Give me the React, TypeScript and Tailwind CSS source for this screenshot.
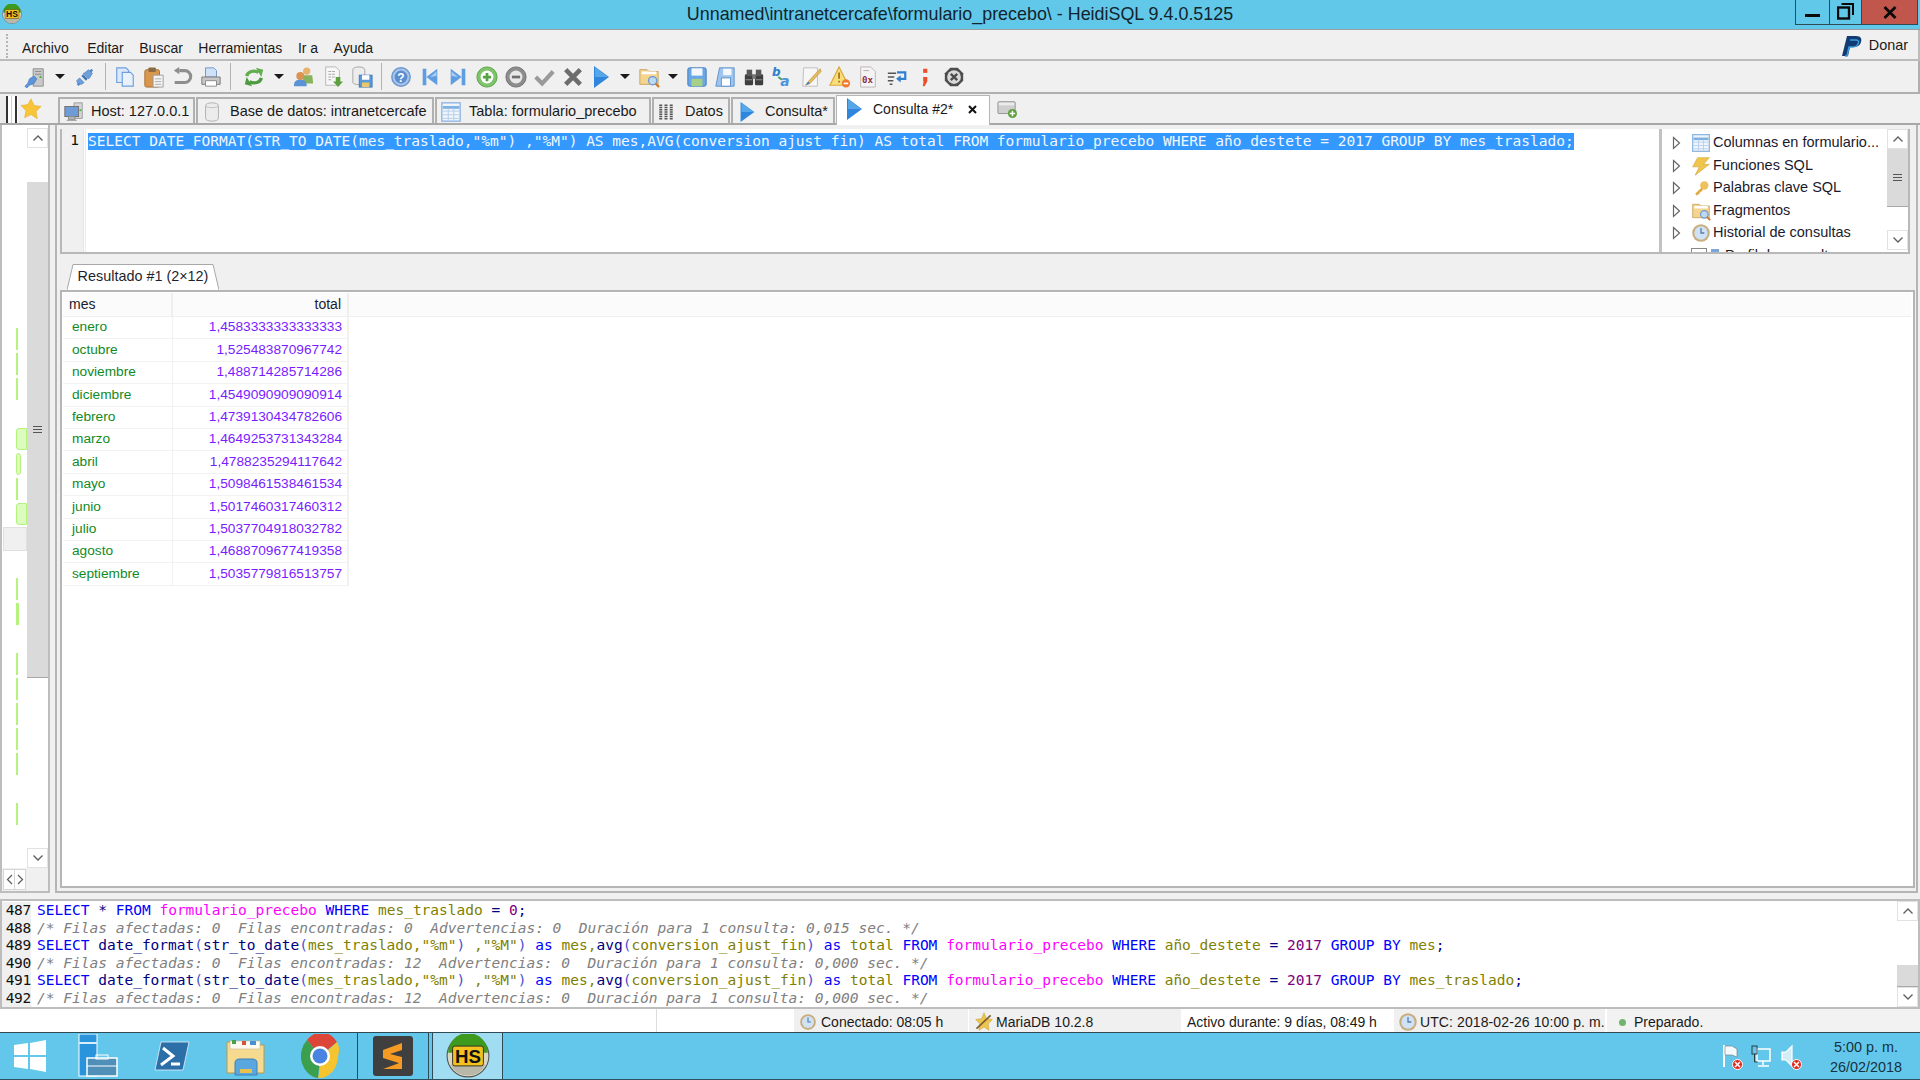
import React from "react";

const S = ({ children, s = 22, className = "" }: { children: React.ReactNode; s?: number; className?: string }) => (
  <svg width={s} height={s} viewBox="0 0 24 24" className={"shrink-0 " + className}>{children}</svg>
);

const PlugBlue = () => (
  <g>
    <path d="M4 21l3-3M20 4l-3 3" stroke="#4f87c9" strokeWidth="2.5" />
    <path d="M6 13l5 5-3 2-4-1-1-3zM11 8l5-4 4 4-3 5-1 1-6-6z" fill="#6ea0dc" stroke="#3f76bb" strokeWidth="0.7" />
    <path d="M8 11l5 5 2-2-5-5z" fill="#3f76bb" />
  </g>
);
const ConnI = () => (
  <S>
    <path d="M10 3h11v19H10z" fill="#c9c9c9" stroke="#8c8c8c" />
    <path d="M12 6h7M12 9h7" stroke="#8a8a8a" />
    <rect x="17" y="11" width="2" height="2" fill="#35b535" />
    <path d="M1 22l3-3 2-5 5-3 3 3-3 5-5 2-3 3z" fill="#5e94d8" stroke="#3f76bb" strokeWidth="0.7" />
  </S>
);
const PlugI = () => <S><PlugBlue /></S>;
const CopyI = () => (
  <S>
    <path d="M3 2h10l3 3v13H3z" fill="#dbe9f9" stroke="#6fa0de" strokeWidth="1.3" />
    <path d="M9 7h9l3 3v12H9z" fill="#e9f2fc" stroke="#6fa0de" strokeWidth="1.3" />
  </S>
);
const PasteI = () => (
  <S>
    <rect x="2" y="4" width="16" height="19" rx="2" fill="#d9964d" stroke="#a96c2b" />
    <rect x="6" y="1.5" width="8" height="5" rx="1" fill="#8a6a45" />
    <path d="M11 10h11v13H11z" fill="#f4f4f4" stroke="#9a9a9a" />
    <path d="M13 14h7M13 17h7M13 20h7" stroke="#a8a8a8" />
  </S>
);
const UndoI = () => (
  <S>
    <path d="M9 5h6a6 6 0 010 13H4" fill="none" stroke="#8e8e8e" strokeWidth="3.4" />
    <path d="M9 1v8l-6-4z" fill="#8e8e8e" />
  </S>
);
const PrintI = () => (
  <S>
    <path d="M6 2h9l3 3v7H6z" fill="#cfe1f7" stroke="#6e94c4" />
    <path d="M2 12h20v8H2z" fill="#c7c7c7" stroke="#777" />
    <path d="M6 16h12v6H6z" fill="#fff" stroke="#888" />
  </S>
);
const RefreshI = () => (
  <S>
    <path d="M4 11c1-5 8-7 13-4" fill="none" stroke="#62ad4e" strokeWidth="3.6" />
    <path d="M14 2l8 2-2 8z" fill="#62ad4e" />
    <path d="M20 13c-1 5-8 7-13 4" fill="none" stroke="#4c9b3f" strokeWidth="3.6" />
    <path d="M10 22l-8-2 2-8z" fill="#4c9b3f" />
  </S>
);
const UsersI = () => (
  <S>
    <circle cx="15" cy="5.5" r="4" fill="#e9b26d" />
    <path d="M10 10h11l1 9H12z" fill="#87b35d" />
    <circle cx="8" cy="11" r="4.4" fill="#d99452" />
    <path d="M1 22c0-6 3-7 7-7s7 1 7 7z" fill="#5b93d6" />
  </S>
);
const ExportI = () => (
  <S>
    <path d="M4 1h11l4 4v16H4z" fill="#f7f7f7" stroke="#b5b5b5" />
    <path d="M7 6h3M11 6h3M7 9h3M11 9h3M7 12h3M11 12h3M7 15h3" stroke="#a0a0a0" />
    <path d="M15 12h5v5h3l-5.500 6L12 17h3z" fill="#5da03e" />
  </S>
);
const DbSaveI = () => (
  <S>
    <path d="M2 4c0-4 13-4 13 0v14c0 3-13 3-13 0z" fill="#ececec" stroke="#a3a3a3" />
    <rect x="9" y="10" width="14" height="13" fill="#5b9ad8" stroke="#3f76bb" />
    <rect x="12" y="10" width="8" height="5" fill="#fff" />
    <rect x="12" y="18" width="8" height="5" fill="#e9c86c" />
  </S>
);
const HelpI = () => (
  <S>
    <circle cx="12" cy="12" r="10" fill="#a9c6ea" stroke="#6c97cf" strokeWidth="1.6" />
    <circle cx="12" cy="12" r="7" fill="#5b8dd0" />
    <text x="12" y="17" textAnchor="middle" fontSize="13" fontWeight="700" fill="#fff" fontFamily="Liberation Sans">?</text>
  </S>
);
const FirstI = () => (
  <S>
    <path d="M4 3h4v18H4z" fill="#5f9de2" />
    <path d="M20 3v18L8 12z" fill="#5f9de2" />
    <path d="M19 6v5l-7 1z" fill="#a9cdf2" />
  </S>
);
const LastI = () => (
  <S>
    <path d="M16 3h4v18h-4z" fill="#5f9de2" />
    <path d="M4 3v18l12-9z" fill="#5f9de2" />
    <path d="M5 6v5l7 1z" fill="#a9cdf2" />
  </S>
);
const PlusI = () => (
  <S>
    <circle cx="12" cy="12" r="11" fill="#7fc46a" stroke="#57a245" />
    <circle cx="12" cy="12" r="7" fill="#fff" />
    <path d="M12 7.500v9M7.500 12h9" stroke="#57a245" strokeWidth="3" />
  </S>
);
const MinusI = () => (
  <S>
    <circle cx="12" cy="12" r="11" fill="#8d8d8d" stroke="#6e6e6e" />
    <circle cx="12" cy="12" r="7" fill="#e9e9e9" />
    <path d="M7.500 12h9" stroke="#6e6e6e" strokeWidth="3" />
  </S>
);
const CheckI = () => (
  <S>
    <path d="M3 12l7 7L22 6" fill="none" stroke="#9a9a9a" strokeWidth="4.5" />
  </S>
);
const XI = () => (
  <S>
    <path d="M4 4l16 16M20 4L4 20" fill="none" stroke="#6d6d6d" strokeWidth="5" />
  </S>
);
const PlayI = ({ s = 24 }: { s?: number }) => (
  <S s={s}>
    <path d="M5 1v22l15-11z" fill="#2f86dc" />
    <path d="M6 2v10h13z" fill="#55a7ea" />
  </S>
);
const FolderI = ({ s = 22 }: { s?: number }) => (
  <S s={s}>
    <path d="M2 4h8l2 2h10v14H2z" fill="#f5d48e" stroke="#c8a35a" />
    <path d="M4 6h16v3H4z" fill="#fff" />
    <circle cx="16" cy="16" r="4.500" fill="#bcd9f3" stroke="#6c97cf" strokeWidth="1.400" />
    <path d="M19 19l4 4" stroke="#cc7a30" strokeWidth="2.400" />
  </S>
);
const SaveI = () => (
  <S>
    <rect x="2" y="2" width="20" height="20" rx="2" fill="#6aa7e6" stroke="#3f76bb" />
    <rect x="6" y="2.500" width="12" height="8" fill="#f4f8fd" />
    <rect x="6" y="14" width="12" height="8" fill="#a6cf87" />
  </S>
);
const SaveAsI = () => (
  <S>
    <path d="M6 2h16v20H2z" fill="#9fc5ee" stroke="#5c8fcb" />
    <rect x="10" y="3" width="9" height="7" fill="#f4f8fd" />
    <rect x="8" y="13" width="10" height="9" fill="#fff" stroke="#5c8fcb" />
  </S>
);
const BinI = () => (
  <S>
    <rect x="2" y="9" width="9" height="12" rx="1.500" fill="#3e3e3e" />
    <rect x="13" y="9" width="9" height="12" rx="1.500" fill="#3e3e3e" />
    <rect x="4" y="4" width="6" height="7" fill="#585858" />
    <rect x="14" y="4" width="6" height="7" fill="#585858" />
    <rect x="10" y="9" width="4" height="5" fill="#777" />
    <path d="M3 15h7M14 15h7" stroke="#9a9a9a" />
  </S>
);
const ReplI = () => (
  <S>
    <text x="1" y="11" fontSize="13" fontWeight="700" fontStyle="italic" fill="#2f7fd0" fontFamily="DejaVu Sans">b</text>
    <text x="10" y="22" fontSize="15" fontWeight="700" fontStyle="italic" fill="#4a94dd" fontFamily="DejaVu Sans">a</text>
    <path d="M8 12l4 3" stroke="#3f9f5f" strokeWidth="2" />
  </S>
);
const PenI = () => (
  <S>
    <path d="M4 2h15v20H3z" fill="#f7f7f7" stroke="#bcbcbc" />
    <path d="M22 3L9 17l-3 4 5-2L23 6z" fill="#e5bd5c" stroke="#b98f38" strokeWidth="0.700" />
    <path d="M6 21l3-4 2 2z" fill="#4a7fc0" />
  </S>
);
const WarnI = () => (
  <S>
    <path d="M11 1l10 20H1z" fill="#f8de7a" stroke="#d9a93a" strokeWidth="1.300" />
    <path d="M11 7v7M11 16v2" stroke="#b0761e" strokeWidth="2" />
    <circle cx="18.500" cy="19" r="4.500" fill="#ef7b2d" />
    <path d="M16 19h5" stroke="#fff" strokeWidth="1.800" />
  </S>
);
const HexI = () => (
  <S>
    <path d="M4 1h11l5 5v17H4z" fill="#f5f3f3" stroke="#bdb5b5" />
    <path d="M7 5h6" stroke="#b0a8a8" />
    <text x="5.500" y="19" fontSize="10" fontWeight="700" fill="#8c2f4d" fontFamily="DejaVu Sans Mono">0x</text>
  </S>
);
const WrapI = () => (
  <S>
    <path d="M2 8h9M2 12h7M2 16h6M4 20h3" stroke="#555" strokeWidth="1.600" />
    <path d="M12 7h9v7h-6" fill="none" stroke="#2f7fd0" strokeWidth="2.400" />
    <path d="M16 10v8l-5-4z" fill="#2f7fd0" />
  </S>
);
const SemiI = () => (
  <S>
    <rect x="10" y="3" width="4.500" height="4.500" fill="#e8502a" />
    <path d="M10 12h4.500v5l-3 5h-2l1-5H10z" fill="#e8502a" />
  </S>
);
const StopI = () => (
  <S>
    <path d="M8 2h8l6 6v8l-6 6H8l-6-6V8z" fill="#4d4d4d" />
    <circle cx="12" cy="12" r="7.500" fill="#d9d9d9" />
    <path d="M8.500 8.500l7 7M15.500 8.500l-7 7" stroke="#4d4d4d" strokeWidth="2.600" />
  </S>
);

const Caret = ({ wide = false }: { wide?: boolean }) => (
  <span className={"flex justify-center shrink-0 " + (wide ? "w-[21.5px]" : "w-[19px]")}>
    <span className="block w-0 h-0 border-x-[5px] border-x-transparent border-t-[5px] border-t-[#1a1a1a]" />
  </span>
);
const Btn = ({ children }: { children: React.ReactNode }) => (
  <span className="w-[28.6px] flex justify-center shrink-0">{children}</span>
);
const Sep = () => <span className="block w-px h-[27px] bg-[#b3b3b3] mx-[5px] shrink-0" />;

const ChevUp = () => (
  <svg width="12" height="8" viewBox="0 0 12 8"><path d="M1.500 6.500L6 2l4.500 4.500" fill="none" stroke="#606060" strokeWidth="1.400" /></svg>
);
const ChevDown = () => (
  <svg width="12" height="8" viewBox="0 0 12 8"><path d="M1.500 1.500L6 6l4.500-4.500" fill="none" stroke="#606060" strokeWidth="1.400" /></svg>
);
const Grip = () => (
  <span className="flex flex-col gap-[2px] w-[9px]">
    <span className="block h-px bg-[#555]" />
    <span className="block h-px bg-[#555]" />
    <span className="block h-px bg-[#555]" />
  </span>
);
const ScrollBtn = ({ down = false }: { down?: boolean }) => (
  <div className="h-[20px] flex items-center justify-center bg-white border border-[#e2e2e2] shrink-0">
    {down ? <ChevDown /> : <ChevUp />}
  </div>
);

const Tab = ({ icon, label, w, gap }: { icon: React.ReactNode; label: string; w: string; gap: string }) => (
  <div className={"h-[26px] flex items-center border-2 border-b-0 border-[#b0b0b0] bg-[#f0f0f0] mr-px shrink-0 pl-[3px] pt-[1px] text-[14.5px] " + w + " " + gap}>
    {icon}
    <span className="whitespace-nowrap">{label}</span>
  </div>
);

const TableIco = ({ s = 22 }: { s?: number }) => (
  <S s={s}>
    <rect x="2" y="2" width="20" height="20" fill="#eef5fc" stroke="#8fb6e0" strokeWidth="1.500" />
    <path d="M3 7h18" stroke="#7fb0e2" strokeWidth="3" />
    <path d="M3 11h18M3 15h18M3 19h18M9 8v13M15 8v13" stroke="#b3cde8" />
  </S>
);

const HostIco = () => (
  <S>
    <path d="M12 2h9v17h-9z" fill="#d5d5d5" stroke="#9a9a9a" />
    <rect x="2" y="6" width="15" height="11" fill="#6f9cd6" stroke="#6d6d6d" />
    <path d="M6 17h7v3H6zM4 21h11" stroke="#888" fill="#bbb" />
    <rect x="18" y="9" width="2" height="2" fill="#3cb83c" />
  </S>
);
const DbIco = () => (
  <S>
    <path d="M5 5c0-4 14-4 14 0v14c0 4-14 4-14 0z" fill="#ececec" stroke="#adadad" />
    <path d="M5 5c0 3 14 3 14 0" fill="none" stroke="#bdbdbd" />
  </S>
);
const RowsIco = () => (
  <S s={18}>
    <path d="M3 3h4M3 6h4M3 9h4M3 12h4M3 15h4M3 18h4M3 21h4M10 3h4M10 6h4M10 9h4M10 12h4M10 15h4M10 18h4M10 21h4M17 3h4M17 6h4M17 9h4M17 12h4M17 15h4M17 18h4M17 21h4" stroke="#555" strokeWidth="1.800" />
  </S>
);

const Tri = () => (
  <svg width="9" height="14" viewBox="0 0 9 14" className="shrink-0"><path d="M1.500 1.500L7.500 7l-6 5.500z" fill="#fff" stroke="#666" strokeWidth="1.200" /></svg>
);

const helpers: { label: string; icon: React.ReactNode }[] = [
  { label: "Columnas en formulario...", icon: <TableIco s={20} /> },
  {
    label: "Funciones SQL",
    icon: (
      <S s={20}>
        <path d="M8 2h14l-7 8h7L5 23l5-10H2z" fill="#eec64d" stroke="#d49f2f" strokeWidth="0.700" />
      </S>
    ),
  },
  {
    label: "Palabras clave SQL",
    icon: (
      <S s={20}>
        <circle cx="16" cy="9" r="5" fill="#efc05e" />
        <path d="M13 11l-8 8 2 2 3-2 1-2 3-2z" fill="#e3a93f" />
      </S>
    ),
  },
  { label: "Fragmentos", icon: <FolderI s={20} /> },
  {
    label: "Historial de consultas",
    icon: (
      <S s={20}>
        <circle cx="12" cy="12" r="10.500" fill="#c9ad7c" />
        <circle cx="12" cy="12" r="8" fill="#cfe2f6" />
        <path d="M12 6v6h4" fill="none" stroke="#5b7fa9" strokeWidth="1.600" />
      </S>
    ),
  },
];

const rows: [string, string][] = [
  ["enero", "1,4583333333333333"],
  ["octubre", "1,525483870967742"],
  ["noviembre", "1,488714285714286"],
  ["diciembre", "1,4549090909090914"],
  ["febrero", "1,4739130434782606"],
  ["marzo", "1,4649253731343284"],
  ["abril", "1,4788235294117642"],
  ["mayo", "1,5098461538461534"],
  ["junio", "1,5017460317460312"],
  ["julio", "1,5037704918032782"],
  ["agosto", "1,4688709677419358"],
  ["septiembre", "1,5035779816513757"],
];

const K = ({ children }: { children: React.ReactNode }) => <span className="text-[#0000ff]">{children}</span>;
const F = ({ children }: { children: React.ReactNode }) => <span className="text-[#000080]">{children}</span>;
const I = ({ children }: { children: React.ReactNode }) => <span className="text-[#808000]">{children}</span>;
const T = ({ children }: { children: React.ReactNode }) => <span className="text-[#ff00ff]">{children}</span>;
const N = ({ children }: { children: React.ReactNode }) => <span className="text-[#800080]">{children}</span>;
const Pn = ({ children }: { children: React.ReactNode }) => <span className="text-[#5050d0]">{children}</span>;
const C = ({ children }: { children: React.ReactNode }) => <span className="text-[#808080] italic">{children}</span>;

const QueryLine = ({ tail }: { tail: string }) => (
  <>
    <K>SELECT</K> <F>date_format</F><Pn>(</Pn><F>str_to_date</F><Pn>(</Pn><I>mes_traslado,"%m"</I><Pn>)</Pn> <I>,"%M"</I><Pn>)</Pn> <K>as</K>{" "}
    <I>mes,</I><F>avg</F><Pn>(</Pn><I>conversion_ajust_fin</I><Pn>)</Pn> <K>as</K> <I>total</I> <K>FROM</K> <T>formulario_precebo</T> <K>WHERE</K>{" "}
    <I>año_destete</I> <F>=</F> <N>2017</N> <K>GROUP BY</K> <I>{tail}</I><F>;</F>
  </>
);

const logLines: [string, React.ReactNode][] = [
  ["487", <><K>SELECT</K> <F>*</F> <K>FROM</K> <T>formulario_precebo</T> <K>WHERE</K> <I>mes_traslado</I> <F>=</F> <N>0</N><F>;</F></>],
  ["488", <C>/* Filas afectadas: 0  Filas encontradas: 0  Advertencias: 0  Duración para 1 consulta: 0,015 sec. */</C>],
  ["489", <QueryLine tail="mes" />],
  ["490", <C>/* Filas afectadas: 0  Filas encontradas: 12  Advertencias: 0  Duración para 1 consulta: 0,000 sec. */</C>],
  ["491", <QueryLine tail="mes_traslado" />],
  ["492", <C>/* Filas afectadas: 0  Filas encontradas: 12  Advertencias: 0  Duración para 1 consulta: 0,000 sec. */</C>],
];

const Marks = () => (
  <div className="absolute inset-0 overflow-hidden">
    {[
      "top-[203px] left-[14px] w-[2px] h-[22px]",
      "top-[228px] left-[14px] w-[2px] h-[22px]",
      "top-[253px] left-[14px] w-[2px] h-[22px]",
      "top-[303px] left-[14px] w-[11px] h-[22px] bg-[#dcfbbe] border border-[#b6f27e] rounded-l-[3px]",
      "top-[328px] left-[14px] w-[5px] h-[22px] bg-[#dcfbbe] border border-[#b6f27e] rounded-[3px]",
      "top-[353px] left-[14px] w-[2px] h-[22px]",
      "top-[378px] left-[14px] w-[11px] h-[22px] bg-[#dcfbbe] border border-[#b6f27e] rounded-l-[3px]",
      "top-[453px] left-[14px] w-[2px] h-[22px]",
      "top-[478px] left-[14px] w-[3px] h-[22px]",
      "top-[528px] left-[14px] w-[2px] h-[22px]",
      "top-[553px] left-[14px] w-[2px] h-[22px]",
      "top-[578px] left-[14px] w-[2px] h-[22px]",
      "top-[603px] left-[14px] w-[2px] h-[22px]",
      "top-[628px] left-[14px] w-[2px] h-[22px]",
      "top-[678px] left-[14px] w-[2px] h-[22px]",
    ].map((c) => (
      <span key={c} className={"absolute bg-[#b6f27e] " + c} />
    ))}
    <span className="absolute top-[402px] left-[1px] w-[24px] h-[24px] bg-[#f0f0f0] border border-[#e0e0e0]" />
  </div>
);

const HSLogo = ({ s = 22 }: { s?: number }) => (
  <svg width={s} height={s} viewBox="0 0 40 40" className="shrink-0">
    <circle cx="20" cy="20" r="19" fill="#d9d8c4" stroke="#555" />
    <path d="M2 17a18 18 0 0136 0z" fill="#3d9a1e" />
    <path d="M4 28a18 18 0 0032 0z" fill="#b9b8a8" />
    <rect x="6" y="11" width="28" height="18" rx="2" fill="#f3c21e" stroke="#222" strokeWidth="0.800" />
    <text x="20" y="26" textAnchor="middle" fontSize="17" fontWeight="700" fill="#111" fontFamily="Liberation Sans">HS</text>
  </svg>
);

const StatusCell = ({ children, className }: { children?: React.ReactNode; className: string }) => (
  <div className={"h-full flex items-center border-r border-[#fff] whitespace-nowrap shrink-0 pt-[3px] " + className}>{children}</div>
);
const ClockI = ({ s = 18 }: { s?: number }) => (
  <S s={s}>
    <circle cx="12" cy="12" r="10.500" fill="#c9ad7c" />
    <circle cx="12" cy="12" r="8" fill="#cfe2f6" />
    <path d="M12 6v6h4" fill="none" stroke="#5b7fa9" strokeWidth="1.600" />
  </S>
);

const TrayX = () => (
  <span className="absolute -right-[3px] -bottom-[2px] w-[11px] h-[11px] rounded-full bg-[#e02b20] border border-white flex items-center justify-center">
    <svg width="7" height="7" viewBox="0 0 7 7"><path d="M1 1l5 5M6 1L1 6" stroke="#fff" strokeWidth="1.500" /></svg>
  </span>
);

export default function App() {
  return (
    <div className="w-[1920px] h-[1080px] flex flex-col overflow-hidden bg-[#f0f0f0] text-[14px] text-[#1a1a1a] font-['Liberation_Sans',sans-serif]">
      {/* Title */}
      <div className="h-[30px] shrink-0 grid grid-cols-[1fr_auto_1fr] bg-[#62c8ea] border-b border-[#9a9fa3]">
        <div className="flex items-center pl-[2px] pb-[1px]">
          <HSLogo s={20} />
        </div>
        <div className="flex items-center text-[17.9px] text-[#12242c]">Unnamed\intranetcercafe\formulario_precebo\ - HeidiSQL 9.4.0.5125</div>
        <div className="flex justify-end items-start pr-[2px]">
          <div className="w-[34px] h-[25px] border border-t-0 border-r-0 border-[#2f4a55] flex items-center justify-center">
            <span className="block w-[15px] h-[3px] bg-[#0a0a0a] mt-[7px]" />
          </div>
          <div className="w-[32px] h-[25px] border-b border-l border-[#2f4a55] flex items-center justify-center">
            <svg width="17" height="17" viewBox="0 0 17 17" className="mb-[2px]">
              <path d="M4.500 1h11.500v11" fill="none" stroke="#0a0a0a" strokeWidth="2" />
              <rect x="1" y="4.500" width="11" height="11" fill="none" stroke="#0a0a0a" strokeWidth="2.400" />
            </svg>
          </div>
          <div className="w-[57px] h-[25px] bg-[#c1564c] border-b border-l border-r border-[#2f4a55] flex items-center justify-center">
            <svg width="14" height="13" viewBox="0 0 14 13"><path d="M1.500 1l11 11M12.500 1l-11 11" stroke="#0a0a0a" strokeWidth="2.800" /></svg>
          </div>
        </div>
      </div>

      {/* Menu */}
      <div className="h-[31px] shrink-0 flex items-center border-b-2 border-[#bcbcbc] border-r-2 pr-[10px] pt-[7px]">
        <span className="w-[6px] h-[24px] ml-[6px] mr-[10px] -mt-[5px] border-l-2 border-dotted border-[#b5b5b5]" />
        <div className="flex gap-[15.500px] flex-1 text-[14px]">
          <span className="mr-[3px]">Archivo</span><span>Editar</span><span>Buscar</span><span>Herramientas</span><span>Ir a</span><span>Ayuda</span>
        </div>
        <svg width="22" height="24" viewBox="0 0 22 24" className="mr-[6px] -mt-[5px]">
          <path d="M6 2h9c5 0 6 3 5 6-1 4-4 5-8 5H9l-2 9H1z" fill="#123a73" />
          <path d="M9 6h6c3 0 3 2 2 4s-3 3-6 3H8l-2 9H4" fill="none" stroke="#3a9bdc" strokeWidth="1.500" />
        </svg>
        <span className="text-[14.4px] -mt-[4px]">Donar</span>
      </div>

      {/* Toolbar */}
      <div className="h-[33px] shrink-0 flex items-center border-b-2 border-r-2 border-[#b0b0b0] pl-[21px]">
        <Btn><ConnI /></Btn><Caret wide /><Btn><PlugI /></Btn>
        <Sep />
        <Btn><CopyI /></Btn><Btn><PasteI /></Btn><Btn><UndoI /></Btn><Btn><PrintI /></Btn>
        <Sep />
        <span className="w-[4px]" />
        <Btn><RefreshI /></Btn><Caret wide /><Btn><UsersI /></Btn><Btn><ExportI /></Btn><Btn><DbSaveI /></Btn>
        <Sep />
        <Btn><HelpI /></Btn><Btn><FirstI /></Btn><Btn><LastI /></Btn><Btn><PlusI /></Btn><Btn><MinusI /></Btn><Btn><CheckI /></Btn><Btn><XI /></Btn><Btn><PlayI /></Btn><Caret /><Btn><FolderI /></Btn><Caret /><Btn><SaveI /></Btn><Btn><SaveAsI /></Btn><Btn><BinI /></Btn><Btn><ReplI /></Btn><Btn><PenI /></Btn><Btn><WarnI /></Btn><Btn><HexI /></Btn><Btn><WrapI /></Btn><Btn><SemiI /></Btn><Btn><StopI /></Btn>
      </div>

      {/* Tabs row */}
      <div className="h-[31px] shrink-0 flex items-end border-b-2 border-[#a8a8a8]">
        <div className="w-[18px] h-[27px] flex bg-white shrink-0 self-start mt-[2px]">
          <span className="block w-[6px] h-full bg-[#ececec]" />
          <span className="block w-[2px] h-full bg-[#333]" />
          <span className="block w-[3px] h-full bg-white" />
          <span className="block w-[1px] h-full bg-[#bcd3ef]" />
          <span className="block w-[3px] h-full bg-white" />
          <span className="block w-[2px] h-full bg-[#333]" />
        </div>
        <div className="w-[26px] mr-[14px] flex justify-center self-center shrink-0">
          <svg width="22" height="22" viewBox="0 0 24 24"><path d="M12 1l3.400 7.200 7.600 1-5.500 5.400 1.400 7.900L12 18l-6.900 3.500 1.400-7.900L1 8.200l7.600-1z" fill="#f8c53a" stroke="#e6a81f" strokeWidth="0.600" /></svg>
        </div>
        <Tab icon={<HostIco />} label="Host: 127.0.0.1" w="w-[137px]" gap="gap-[6px]" />
        <Tab icon={<DbIco />} label="Base de datos: intranetcercafe" w="w-[238px]" gap="gap-[7px]" />
        <Tab icon={<TableIco />} label="Tabla: formulario_precebo" w="w-[216px]" gap="gap-[7px]" />
        <Tab icon={<RowsIco />} label="Datos" w="w-[78px]" gap="gap-[10px]" />
        <Tab icon={<PlayI s={22} />} label="Consulta*" w="w-[104px]" gap="gap-[7px]" />
        <div className="h-[30px] w-[154px] flex items-center bg-white border border-b-0 border-[#b5b5b5] pl-[5px] pb-[3px] gap-[7px] shrink-0 -mb-[2px]">
          <PlayI s={24} />
          <span className="whitespace-nowrap">Consulta #2*</span>
          <svg width="9" height="9" viewBox="0 0 9 9" className="ml-[8px]"><path d="M1 1l7 7M8 1L1 8" stroke="#111" strokeWidth="2" /></svg>
        </div>
        <div className="self-center ml-[6px] shrink-0">
          <svg width="22" height="20" viewBox="0 0 24 22">
            <rect x="2" y="3" width="19" height="13" rx="1" fill="#cfcfcf" stroke="#8f8f8f" />
            <rect x="3" y="4" width="17" height="3" fill="#ececec" />
            <circle cx="18" cy="16" r="5" fill="#5da03e" />
            <path d="M18 13v6M15 16h6" stroke="#fff" strokeWidth="1.600" />
          </svg>
        </div>
      </div>

      {/* Body */}
      <div className="flex-1 min-h-0 flex">
        {/* left */}
        <div className="w-[50px] shrink-0 flex flex-col border-l-2 border-r-2 border-b-2 border-[#bdbdbd] mb-[6px]">
          <div className="flex-1 min-h-0 flex">
            <div className="w-[25px] bg-white relative shrink-0">
              <Marks />
            </div>
            <div className="w-[21px] shrink-0 flex flex-col bg-white pt-[3px]">
              <ScrollBtn />
              <div className="h-[34px] bg-white" />
              <div className="h-[496px] bg-[#dadada] border-b border-[#a8a8a8] flex items-center justify-center pr-px">
                <Grip />
              </div>
              <div className="flex-1" />
              <ScrollBtn down />
            </div>
          </div>
          <div className="h-[23px] shrink-0 flex items-center pl-[1px]">
            <span className="w-[12px] h-[21px] border border-[#d5d5d5] bg-white flex items-center justify-center">
              <svg width="7" height="11" viewBox="0 0 7 11"><path d="M6 1L1.500 5.500 6 10" fill="none" stroke="#606060" strokeWidth="1.300" /></svg>
            </span>
            <span className="w-[11px] h-[21px] border border-l-0 border-[#d5d5d5] bg-white flex items-center justify-center">
              <svg width="7" height="11" viewBox="0 0 7 11"><path d="M1 1l4.500 4.500L1 10" fill="none" stroke="#606060" strokeWidth="1.300" /></svg>
            </span>
          </div>
        </div>

        {/* main */}
        <div className="flex-1 min-w-0 ml-[5px] mr-[2px] mb-[6px] border-l-2 border-b-2 border-r-2 border-[#b5b5b5] pl-[3px] pr-[1px] pt-[4px] pb-[3px] flex flex-col">
          {/* editor + helpers */}
          <div className="h-[125px] mr-[5px] shrink-0 flex border-2 border-t-0 border-[#b8b8b8] bg-white font-['DejaVu_Sans_Mono',monospace] text-[14.53px]">
            <div className="flex-1 min-w-0 flex">
              <div className="w-[22px] bg-[#f0f0f0] text-right text-[#111] pr-[4px] pt-[3px] leading-[17px] border-r border-[#e4e4e4] shrink-0">1</div>
              <div className="w-[2px] shrink-0 border-r border-[#ececec]" />
              <div className="pl-[2px] pt-[2px] flex-1 min-w-0 whitespace-pre">
                <span className="inline-block bg-[#3399ff] text-[#f2f7ff] h-[17px] leading-[17px]">SELECT DATE_FORMAT(STR_TO_DATE(mes_traslado,"%m") ,"%M") AS mes,AVG(conversion_ajust_fin) AS total FROM formulario_precebo WHERE año_destete = 2017 GROUP BY mes_traslado;</span>
              </div>
            </div>
            <div className="w-[249px] shrink-0 flex border-l-[3px] border-[#c2c2c2] font-['Liberation_Sans',sans-serif] text-[14.5px] overflow-hidden">
              <div className="flex-1 min-w-0 pl-[10px] pt-[3px] overflow-hidden">
                {helpers.map((h) => (
                  <div key={h.label} className="h-[22.500px] flex items-center whitespace-nowrap">
                    <Tri />
                    <span className="w-[10px]" />
                    <span className="w-[20px] flex justify-center shrink-0">{h.icon}</span>
                    <span className="ml-[2px] text-[#1a1a2e]">{h.label}</span>
                  </div>
                ))}
                <div className="h-[22px] flex items-center whitespace-nowrap">
                  <span className="w-[9px]" />
                  <span className="w-[10px]" />
                  <span className="w-[16px] h-[16px] border border-[#888] bg-white shrink-0" />
                  <span className="w-[4px]" />
                  <span className="w-[8px] h-[14px] bg-[#7aa6dc] shrink-0" />
                  <span className="ml-[6px]">Perfil de consulta</span>
                </div>
              </div>
              <div className="w-[21px] shrink-0 flex flex-col pb-[2px]">
                <ScrollBtn />
                <div className="h-[58px] bg-[#dadada] border-b border-[#a8a8a8] flex items-center justify-center"><Grip /></div>
                <div className="flex-1" />
                <ScrollBtn down />
              </div>
            </div>
          </div>

          {/* Result tab */}
          <div className="h-[36px] shrink-0 flex items-end pl-[7px]">
            <div className="h-[26px] w-[152px] relative flex items-center justify-center text-[14.4px] text-[#1f1f2e] shrink-0">
              <svg width="152" height="26" viewBox="0 0 152 26" className="absolute inset-0">
                <path d="M0 26L6 .5h140l6 25.500" fill="#fff" stroke="#a8a8a8" />
              </svg>
              <span className="relative">Resultado #1 (2×12)</span>
            </div>
          </div>

          {/* Grid */}
          <div className="flex-1 min-h-0 bg-white border-2 border-[#b5b5b5] pt-[1px] pl-[1px] pr-[2px]">
            <div className="h-[24px] flex bg-[#fbfbfb] border-b border-[#efefef]">
              <div className="w-[110px] shrink-0 pl-[6px] flex items-center border-r-2 border-[#efefef] text-[#1a1a2e]">mes</div>
              <div className="w-[176px] shrink-0 pr-[6px] flex items-center justify-end border-r-2 border-[#efefef] text-[#1a1a2e]">total</div>
              <div className="flex-1" />
            </div>
            {rows.map(([m, t]) => (
              <div key={m} className="h-[22.420px] flex text-[13.7px]">
                <div className="w-[110px] shrink-0 pl-[9px] flex items-center border-r border-b border-[#f2f2f2] text-[#118a1f]">{m}</div>
                <div className="w-[176px] shrink-0 pr-[5px] flex items-center justify-end border-r-2 border-b border-[#f2f2f2] text-[#7a1cff]">{t}</div>
              </div>
            ))}
          </div>
        </div>
      </div>

      {/* Log */}
      <div className="h-[110px] shrink-0 flex bg-white border-y-2 border-x-2 border-[#bdbdbd] font-['DejaVu_Sans_Mono',monospace] text-[14.53px]">
        <div className="flex-1 min-w-0 pt-[1px] overflow-hidden">
          {logLines.map(([n, c]) => (
            <div key={n} className="h-[17.500px] leading-[17.500px] flex whitespace-pre">
              <span className="w-[29px] shrink-0 bg-[#f0f0f0] text-right text-[#111] tracking-[-0.3px] mr-[6px]">{n}</span>
              <span>{c}</span>
            </div>
          ))}
        </div>
        <div className="w-[21px] shrink-0 flex flex-col">
          <ScrollBtn />
          <div className="flex-1" />
          <div className="h-[22px] bg-[#dadada] border-b border-[#a8a8a8]" />
          <ScrollBtn down />
        </div>
      </div>

      {/* Status */}
      <div className="h-[23px] shrink-0 flex bg-white">
        <StatusCell className="w-[656px]" />
        <StatusCell className="w-[138px] border-l border-l-[#dddddd]" />
        <StatusCell className="w-[175px] bg-[#f0f0f0] pl-[5px] gap-[4px]"><ClockI />Conectado: 08:05 h</StatusCell>
        <StatusCell className="w-[213px] bg-[#f0f0f0] pl-[5px] gap-[2px]">
          <S s={20}><path d="M12 1l3 7 7 1-5 5 1 8-6-4-6 4 1-8-5-5 7-1z" fill="#eec64d" stroke="#c59a2d" strokeWidth="0.600" /><path d="M3 20L20 4" stroke="#7b5e33" strokeWidth="2" /></S>
          MariaDB 10.2.8
        </StatusCell>
        <StatusCell className="w-[212px] pl-[5px]">Activo durante: 9 días, 08:49 h</StatusCell>
        <StatusCell className="w-[212px] bg-[#f0f0f0] pl-[4px] gap-[2px] tracking-[0.1px]">
          <ClockI s={20} />UTC: 2018-02-26 10:00 p. m.
        </StatusCell>
        <div className="flex-1 bg-[#f2f2f2] flex items-center pl-[12px] pt-[3px] gap-[8px] border-l border-white">
          <span className="block w-[7px] h-[7px] rounded-full bg-[#71b46d]" />
          Preparado.
        </div>
      </div>

      {/* Taskbar */}
      <div className="h-[48px] shrink-0 flex items-center bg-[#62c7ea] border-t border-[#2f4a55] border-b border-b-[#2f5060]">
        <div className="w-[357px] shrink-0 flex items-center h-full">
          <span className="w-[60px] flex justify-center shrink-0">
            <svg width="34" height="34" viewBox="0 0 34 34">
              <path d="M1 6l14-2v12H1zM17 4l16-3v15H17zM1 18h14v12l-14-2zM17 18h16v15l-16-3z" fill="#fff" />
            </svg>
          </span>
          <span className="w-[75px] flex justify-center shrink-0">
            <svg width="40" height="44" viewBox="0 0 40 44">
              <rect x="1" y="0" width="18" height="42" fill="#2993dc" stroke="#fff" />
              <rect x="1" y="8" width="18" height="2" fill="#d9eefb" />
              <rect x="9" y="24" width="30" height="18" fill="#4f8fb8" stroke="#fff" strokeWidth="1.500" />
              <rect x="18" y="21" width="12" height="4" fill="none" stroke="#fff" />
              <path d="M9 32h30" stroke="#fff" />
            </svg>
          </span>
          <span className="w-[74px] flex justify-center shrink-0">
            <svg width="36" height="32" viewBox="0 0 36 32">
              <path d="M7 2h28l-6 28H1z" fill="#2b6ea8" stroke="#e5f2fb" strokeWidth="0.800" />
              <path d="M9 8l10 8-12 9" fill="none" stroke="#fff" strokeWidth="3" />
              <path d="M17 24h9" stroke="#fff" strokeWidth="3" />
            </svg>
          </span>
          <span className="w-[74px] flex justify-center shrink-0">
            <svg width="40" height="40" viewBox="0 0 40 40">
              <path d="M1 6h14l3 3h20v28H1z" fill="#f5da8f" stroke="#b79a4e" />
              <path d="M4 5h30v8H4z" fill="#fdfaf0" stroke="#c9b98e" strokeWidth="0.600" />
              <rect x="6" y="4" width="4" height="4" fill="#4aa04a" />
              <rect x="16" y="5" width="4" height="4" fill="#d85040" />
              <rect x="24" y="5" width="6" height="4" fill="#4a90d0" />
              <path d="M9 39V27c0-3 2-4 5-4h12c3 0 5 1 5 4v12z" fill="#5aa7e0" stroke="#3d80b8" />
              <rect x="14" y="33" width="12" height="4" fill="#e9c14d" />
            </svg>
          </span>
          <span className="w-[74px] flex justify-center shrink-0">
            <svg width="38" height="44" viewBox="0 0 38 44">
              <path d="M19 22L6 6a19 22 0 0130 2z" fill="#dc4537" />
              <path d="M21 22h16a19 22 0 01-20 22z" fill="#f6c42e" />
              <path d="M19 22l-2 22A19 22 0 016 6z" fill="#3b9f4e" />
              <path d="M21 22L36 8c3 5 2 11 1 14z" fill="#f6c42e" />
              <circle cx="19" cy="22" r="10" fill="#fff" />
              <circle cx="19" cy="22" r="7.500" fill="#4a84e0" />
            </svg>
          </span>
        </div>
        <div className="w-[72px] h-full flex items-center justify-center border-x border-[#2f4a55] shrink-0">
          <svg width="40" height="40" viewBox="0 0 40 40">
            <rect width="40" height="40" rx="3" fill="#3f3f3f" />
            <path d="M29 7L10 14v8l19 6v-7l-12-3 12-4z" fill="#f59a23" />
            <path d="M10 19l19 6v8l-19-0 0 0 19-7-19-6z" fill="#f59a23" />
          </svg>
        </div>
        <div className="w-[71px] h-full ml-[3px] flex items-center justify-center bg-[#a0dcf2] border-x border-[#2f4a55] shrink-0">
          <HSLogo s={44} />
        </div>
        <div className="flex-1" />
        <div className="flex items-center gap-[10px] mr-[22px] shrink-0">
          <span className="relative block w-[18px] h-[24px]">
            <svg width="18" height="24" viewBox="0 0 18 24"><path d="M2 1v22" stroke="#fff" strokeWidth="2" /><path d="M3 2h7l5 3v8l-5-2H3z" fill="#f4f9fb" stroke="#6c7b80" strokeWidth="0.600" /></svg>
            <TrayX />
          </span>
          <span className="block w-[20px] h-[24px] ml-[1px]">
            <svg width="20" height="24" viewBox="0 0 20 24"><rect x="6" y="5" width="13" height="12" fill="none" stroke="#fff" strokeWidth="1.500" /><rect x="1" y="2" width="5" height="8" fill="none" stroke="#2a3c44" strokeWidth="1" /><path d="M12 17v4M7 22h11" stroke="#fff" strokeWidth="1.500" /><path d="M3.500 10v8h3" stroke="#2a3c44" fill="none" /></svg>
          </span>
          <span className="relative block w-[18px] h-[24px]">
            <svg width="18" height="24" viewBox="0 0 18 24"><path d="M1 8h4l6-6v20l-6-6H1z" fill="#d4ecf6" stroke="#fff" strokeWidth="1.200" /></svg>
            <TrayX />
          </span>
        </div>
        <div className="w-[90px] mr-[9px] pt-[1px] text-center text-[#16323f] text-[14.400px] leading-[20px] shrink-0">
          <div>5:00 p. m.</div>
          <div>26/02/2018</div>
        </div>
      </div>
    </div>
  );
}
